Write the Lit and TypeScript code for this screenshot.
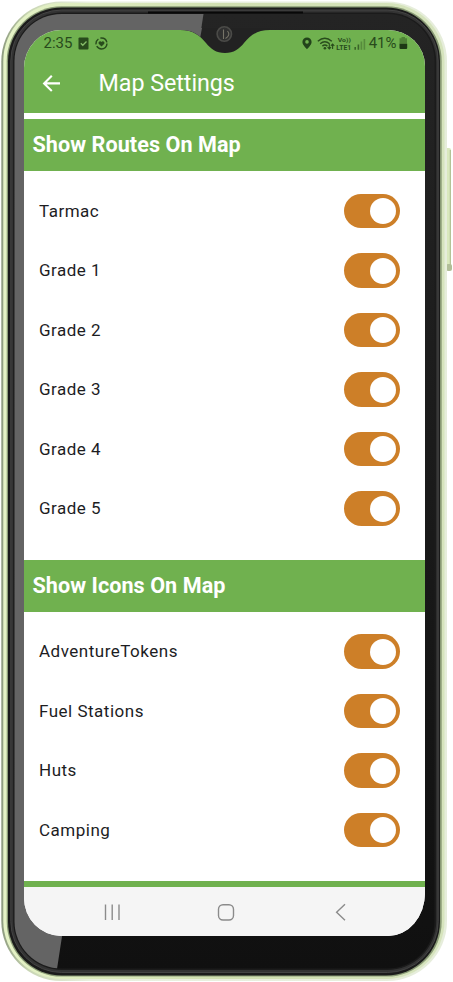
import { LitElement, html, css } from "lit";
import { customElement, property } from "lit/decorators.js";

@customElement("setting-toggle")
class SettingToggle extends LitElement {
  @property({ type: Boolean, reflect: true }) on = true;
  static styles = css`
    :host { display: flex; align-items: center; justify-content: flex-end; box-sizing: border-box;
      width: 55.6px; height: 34.5px; border-radius: 18px; background: #cd7f28; padding: 0 4.2px; }
    .knob { width: 26px; height: 26px; border-radius: 50%; background: #fff; }
  `;
  render() { return html`<span class="knob"></span>`; }
}

@customElement("settings-group")
class SettingsGroup extends LitElement {
  @property() heading = "";
  @property({ attribute: false }) items: string[] = [];
  static styles = css`
    :host { display: block; flex: none; background: #fff; }
    h2 { margin: 0; height: 52px; padding: 0 0 0 8.5px; line-height: 51px; background: #70b14f; color: #fff;
      font-size: 21.6px; font-weight: 700; letter-spacing: 0.05px; white-space: nowrap; }
    .list { padding: 10.3px 25.3px 21.25px 15px; }
    .row { display: flex; align-items: center; justify-content: space-between; height: 59.5px;
      font-size: 17px; letter-spacing: 0.5px; color: #1d1d1f; white-space: nowrap; }
    .row span { line-height: 20px; padding-bottom: 1px; }
  `;
  render() {
    return html`<h2>${this.heading}</h2>
      <div class="list">
        ${this.items.map((t) => html`<div class="row"><span>${t}</span><setting-toggle on></setting-toggle></div>`)}
      </div>`;
  }
}

@customElement("app-root")
class AppRoot extends LitElement {
  static styles = css`
    :host { display: block; position: relative; box-sizing: border-box; width: 453px; height: 982px; overflow: hidden;
      background: #fff; padding: 30px 28px 46px 24px; font-family: Roboto, sans-serif; }
    .frame, .notch { position: absolute; left: 0; top: 0; }
    .screen { position: relative; display: flex; flex-direction: column; width: 401px; height: 906px; overflow: hidden;
      border-radius: 37px 37px 37px 37px / 38px 36px 43px 38px; background: #fff; }
    .status { display: flex; align-items: center; justify-content: space-between; box-sizing: border-box; height: 26px; flex: none;
      padding: 0 17px 0 19.5px; background: #70b14f; color: #284b1c; font-size: 15px; }
    .left, .right { display: flex; align-items: center; }
    .left svg { margin-left: 6px; }
    .right span { margin: 0 2.5px 0 1px; }
    .bar { display: flex; align-items: center; box-sizing: border-box; height: 57px; flex: none; padding: 0 0 3px 18px; background: #70b14f; color: #fff; }
    h1 { margin: 0 0 0 36.5px; font-size: 23.3px; font-weight: 400; letter-spacing: -0.05px; white-space: nowrap; }
    .gap { height: 6px; flex: none; }
    .strip { height: 6px; flex: none; background: #70b14f; }
    .nav { display: flex; flex: 1; align-items: center; background: #f5f5f5; }
    .nav svg { display: block; }
  `;

  frame() {
    return html`<svg class="frame" width="453" height="982" viewBox="0 0 453 982">
      <defs>
        <linearGradient id="rim" x1="0" x2="1"><stop offset="0" stop-color="#e5f3c6" /><stop offset="0.5" stop-color="#d0dfb1" /><stop offset="1" stop-color="#d6e4bd" /></linearGradient>
        <linearGradient id="edge" x1="0" x2="1"><stop offset="0" stop-color="#8d9b7e" /><stop offset="0.06" stop-color="#c9d6b4" /><stop offset="0.2" stop-color="#e9f0df" /><stop offset="1" stop-color="#e6eddb" /></linearGradient>
        <linearGradient id="dark" x1="0" y1="0" x2="0" y2="1"><stop offset="0" stop-color="#242424" /><stop offset="1" stop-color="#101010" /></linearGradient>
        <clipPath id="glass"><rect x="14.5" y="14" width="420" height="954.5" rx="47" /></clipPath>
      </defs>
      <rect x="444" y="148" width="7" height="122" rx="2" fill="#d9e8bd" />
      <path d="M450.3 150V265" stroke="#abb98e" stroke-width="1" />
      <rect x="446" y="264" width="6" height="7" rx="2" fill="#b1be98" />
      <rect x="1.3" y="1.5" width="445.7" height="979.5" rx="60" fill="url(#edge)" />
      <rect x="3.3" y="3" width="441.2" height="976" rx="58" fill="url(#rim)" />
      <rect x="6.7" y="6.3" width="435" height="970.3" rx="55" fill="#899a75" />
      <rect x="8" y="7.5" width="432" height="968" rx="54" fill="#1b1b1b" />
      <rect x="10.8" y="10" width="427.4" height="962.5" rx="51" fill="#333" stroke="#444" stroke-width="1" />
      <rect x="13.2" y="12.5" width="423" height="957.5" rx="49" fill="#1b1b1b" />
      <g clip-path="url(#glass)">
        <rect x="14" y="14" width="421" height="955" fill="url(#dark)" />
        <path d="M14 14H203.5L57 969H14Z" fill="#646464" />
      </g>
      <path d="M148 12.5H303" stroke="#080808" stroke-width="2" />
    </svg>`;
  }

  render() {
    return html`
      ${this.frame()}
      <main class="screen">
        <header class="status">
          <div class="left"><span>2:35</span>
            <svg width="11" height="13" viewBox="0 0 11 13"><rect x="0.5" y="0.5" width="10" height="12" rx="1" fill="#284b1c" /><path d="M2.8 6.3L4.8 8.3L8.5 4.5" fill="none" stroke="#86bd69" stroke-width="1.3" /></svg>
            <svg width="13" height="13" viewBox="0 0 13 13"><circle cx="6.5" cy="6.5" r="5.5" fill="none" stroke="#284b1c" stroke-width="1.4" stroke-dasharray="14 2 6 2 8.5 2" /><path d="M6.5 9.5L3.7 6.7C2.8 4.6 5.5 3.4 6.5 5.1C7.5 3.4 10.2 4.6 9.3 6.7Z" fill="#284b1c" /></svg>
          </div>
          <div class="right">
            <svg width="66" height="16" viewBox="0 0 66 16">
              <path fill-rule="evenodd" d="M5 2.4A4.6 4.6 0 0 0 .4 7C.4 10 5 14.2 5 14.2S9.6 10 9.6 7A4.6 4.6 0 0 0 5 2.4ZM5 5.1A1.8 1.8 0 1 1 5 8.7A1.8 1.8 0 0 1 5 5.1Z" fill="#22431a" />
              <g fill="none" stroke="#284b1c" stroke-width="1.4"><path d="M15.8 6.2Q22.8 .2 29.8 6.2M18.2 8.7Q22.8 4.6 27.6 8.7M20.4 11.1Q22.9 8.9 25.4 11.1" /><path d="M27.3 9V14M25.6 12.1L27.3 14L29 12.1M30.6 14V9M28.9 10.9L30.6 9L32.3 10.9" stroke-width="1.1" /></g>
              <circle cx="22.9" cy="13.2" r="1.3" fill="#284b1c" />
              <g fill="#284b1c" font-weight="700"><text x="35.8" y="6.6" font-size="6" textLength="13" lengthAdjust="spacingAndGlyphs">Vo))</text><text x="34.2" y="15" font-size="7" textLength="15" lengthAdjust="spacingAndGlyphs">LTE1</text></g>
              <path d="M53.2 12V14.7M56.4 9.5V14.7" stroke="#3a6529" stroke-width="1.6" /><path d="M59.4 6.5V14.7M62.4 4V14.7" stroke="#568b3c" stroke-width="1.6" />
            </svg>
            <span>41%</span>
            <svg width="9" height="14" viewBox="0 0 9 14"><path d="M2.5 1H6V2.2H8V7.8H.5V2.2H2.5Z" fill="#4f8237" /><path d="M.5 7.8H8.2V12Q8.2 13 7.2 13H1.5Q.5 13 .5 12Z" fill="#1d3815" /></svg>
          </div>
        </header>
        <div class="bar">
          <svg width="20" height="20" viewBox="0 0 20 20"><path d="M18 10.4H2.5M9.8 2.7L2.1 10.4L9.8 18.1" fill="none" stroke="#fff" stroke-width="2.1" /></svg>
          <h1>Map Settings</h1>
        </div>
        <div class="gap"></div>
        <settings-group heading="Show Routes On Map" .items=${["Tarmac", "Grade 1", "Grade 2", "Grade 3", "Grade 4", "Grade 5"]}></settings-group>
        <settings-group heading="Show Icons On Map" .items=${["AdventureTokens", "Fuel Stations", "Huts", "Camping"]}></settings-group>
        <div class="strip"></div>
        <nav class="nav">
          <svg width="401" height="49" viewBox="0 0 401 49" fill="none" stroke="#8b8b8b" stroke-width="1.4"><path d="M81.5 17.5V33M88.2 17.5V33M95 17.5V33" /><rect x="194.5" y="17.8" width="15" height="15.2" rx="4.5" /><path d="M321 17.3L312.6 25.3L321 33.3" /></svg>
        </nav>
      </main>
      <svg class="notch" width="453" height="60" viewBox="0 0 453 60">
        <path d="M180 30C194 30 200 36 206 43C211 49 216 53 225 53C234 53 239 49 244 43C250 36 256 30 270 30V28H180Z" fill="#222" />
        <path d="M180 30C190 30 195 32.3 200.3 37L202 28H180Z" fill="#646464" />
        <circle cx="224.3" cy="34" r="7.2" fill="#303030" stroke="#4b4b48" stroke-width="1.6" />
        <path d="M223.5 29.5V39M225.5 38.5Q231 35 227.5 31" stroke="#777468" stroke-width="1.1" fill="none" />
      </svg>`;
  }
}
